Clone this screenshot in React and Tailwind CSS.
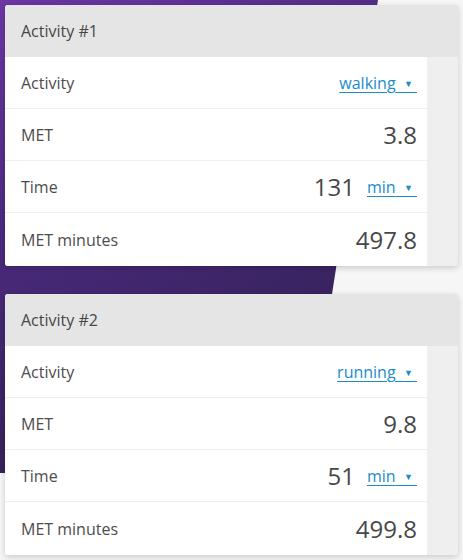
import React from "react";

const activities = [
  { title: "Activity #1", activity: "walking", met: "3.8", time: "131", metMinutes: "497.8" },
  { title: "Activity #2", activity: "running", met: "9.8", time: "51", metMinutes: "499.8" },
];

function Dropdown({ label }) {
  return (
    <span className="text-[#1a8bcd] text-[16px] underline underline-offset-[3px] decoration-1 cursor-pointer whitespace-nowrap">
      {label}&nbsp;&nbsp;<span className="text-[9px] align-[2px]">▼</span>&nbsp;
    </span>
  );
}

function Row({ label, children, last }) {
  return (
    <div className={`flex items-center justify-between pl-4 pr-[10px] bg-white ${last ? "h-[53px]" : "h-[52px] border-b border-[#f0f0f0]"}`}>
      <span className="text-[16px] text-[#4d4d4d]">{label}</span>
      <div className="flex items-center gap-3">{children}</div>
    </div>
  );
}

function ActivityCard({ a }) {
  return (
    <div className="rounded-[3px] overflow-hidden bg-[#efefef] shadow-[0_2px_6px_rgba(0,0,0,0.18)]">
      <div className="h-[52px] flex items-center px-4 bg-[#e5e5e5] text-[16px] text-[#474747]">{a.title}</div>
      <div className="mr-[31px]">
        <Row label="Activity">
          <Dropdown label={a.activity} />
        </Row>
        <Row label="MET">
          <span className="text-[24px] text-[#474747] leading-none">{a.met}</span>
        </Row>
        <Row label="Time">
          <span className="text-[24px] text-[#474747] leading-none">{a.time}</span>
          <Dropdown label="min" />
        </Row>
        <Row label="MET minutes" last>
          <span className="text-[24px] text-[#474747] leading-none">{a.metMinutes}</span>
        </Row>
      </div>
    </div>
  );
}

export default function App() {
  return (
    <div
      className="relative w-[463px] h-[560px] overflow-hidden bg-[#f6f6f6]"
      style={{ fontFamily: '"Open Sans", "Noto Sans", sans-serif' }}
    >
      {/* purple backdrop */}
      <div className="absolute inset-0 bg-[linear-gradient(155deg,#6c36a3_0%,#4b2a7f_30%,#3a2462_55%,#2e1a47_80%)] [clip-path:polygon(0_0,378px_0,304px_473px,0_473px)]" />
      <div className="relative flex flex-col gap-[28px] p-[5px]">
        {activities.map(a => (
          <ActivityCard key={a.title} a={a} />
        ))}
      </div>
    </div>
  );
}
